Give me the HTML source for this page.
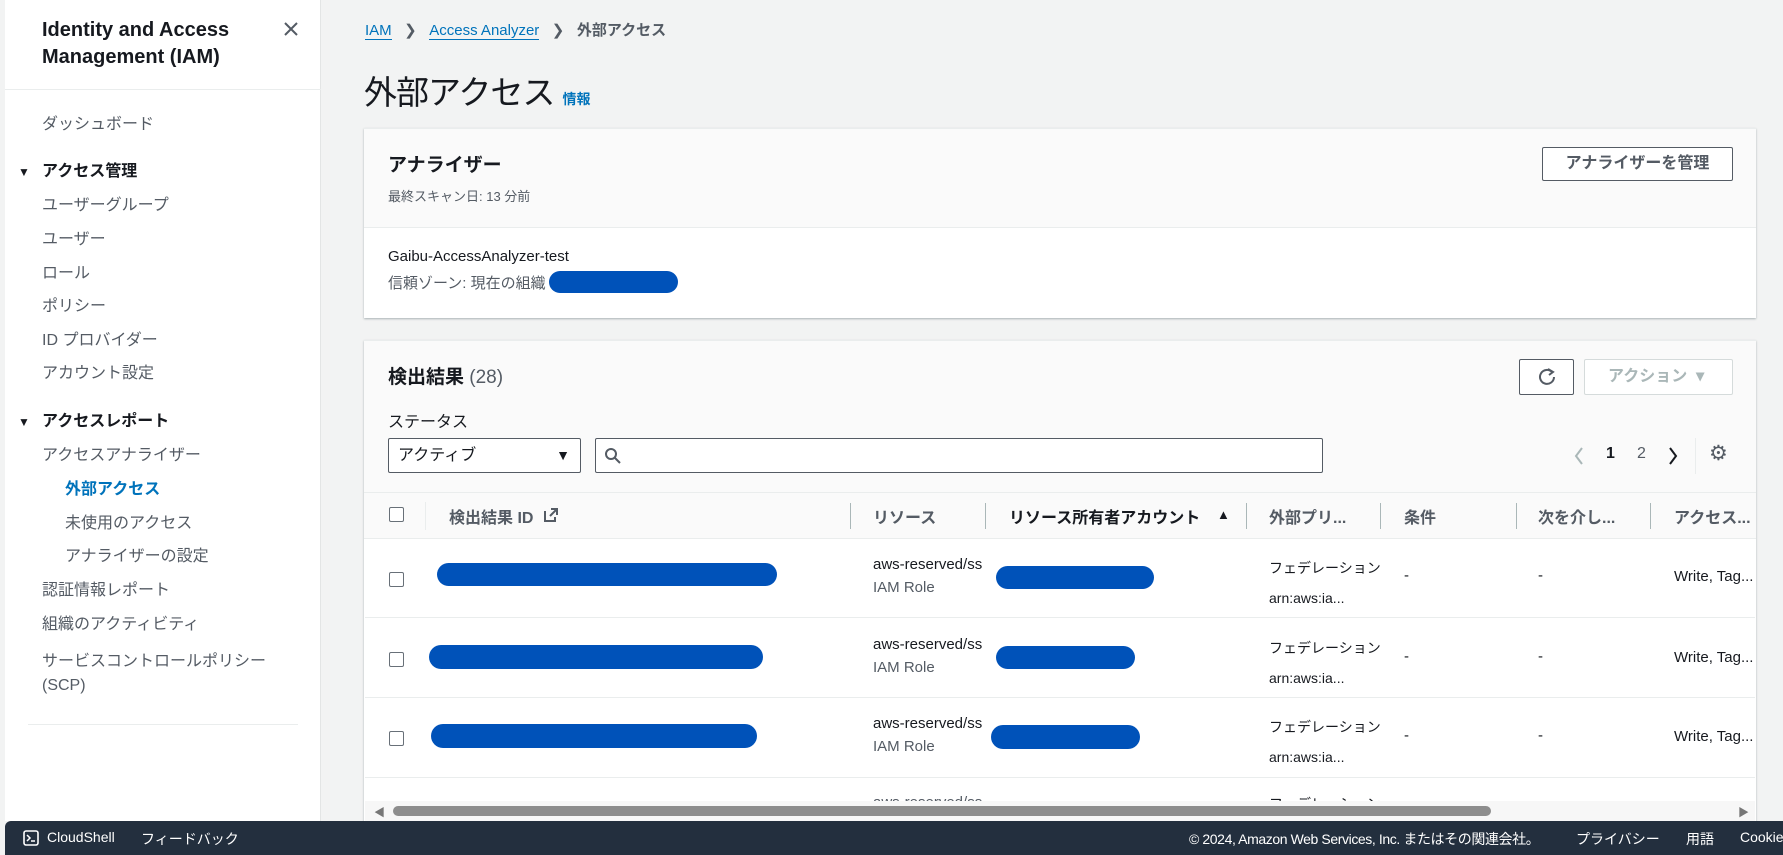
<!DOCTYPE html>
<html><head><meta charset="utf-8"><style>
*{box-sizing:border-box;margin:0;padding:0}
body{width:1783px;height:855px;overflow:hidden;background:#f2f3f3;font-family:"Liberation Sans","Noto Sans CJK JP",sans-serif;color:#16191f;position:relative}
.a{position:absolute;white-space:nowrap}
#side{position:absolute;left:5px;top:0;width:316px;height:821px;background:#fff;border-right:1px solid #e3e5e5}
.nav{position:absolute;left:37px;font-size:16px;color:#545b64;line-height:20px}
.b{font-weight:bold;color:#16191f}
.card{position:absolute;left:364px;width:1392px;background:#fff;box-shadow:0 1px 2px rgba(0,28,36,.3);border-top:1px solid #eaeded}
.blob{position:absolute;background:#0052b9;border-radius:12px}
.th{position:absolute;top:504px;font-size:16px;font-weight:bold;color:#545b64}
.dv{position:absolute;top:503px;width:1px;height:26px;background:#aab7b8}
.cb{position:absolute;left:389px;width:15px;height:15px;border:1px solid #687078;border-radius:2px;background:#fff}
.t{position:absolute;font-size:15px;color:#16191f;overflow:hidden;white-space:nowrap}
.s{color:#545b64}
.rl{position:absolute;left:365px;width:1390px;height:1px;background:#eaeded}
.tri{font-size:12px;display:inline-block;width:24px}
</style></head><body>
<div id="side">
<div class="a" style="left:37px;top:17px;font-size:20px;font-weight:bold;line-height:27px">Identity and Access<br>Management (IAM)</div>
<svg class="a" style="left:278px;top:21px" width="16" height="16"><path d="M2 2L14 14M14 2L2 14" stroke="#545b64" stroke-width="2"/></svg>
<div class="a" style="left:0;top:89px;width:316px;height:1px;background:#eaeded"></div>
<div class="nav" style="top:115px">ダッシュボード</div>
<div class="nav b" style="top:162px;left:13px"><span class="tri">▼</span>アクセス管理</div>
<div class="nav" style="top:196px">ユーザーグループ</div>
<div class="nav" style="top:230px">ユーザー</div>
<div class="nav" style="top:264px">ロール</div>
<div class="nav" style="top:297px">ポリシー</div>
<div class="nav" style="top:331px">ID プロバイダー</div>
<div class="nav" style="top:364px">アカウント設定</div>
<div class="nav b" style="top:412px;left:13px"><span class="tri">▼</span>アクセスレポート</div>
<div class="nav" style="top:446px">アクセスアナライザー</div>
<div class="nav" style="top:480px;left:60px;color:#0073bb;font-weight:bold">外部アクセス</div>
<div class="nav" style="top:514px;left:60px">未使用のアクセス</div>
<div class="nav" style="top:547px;left:60px">アナライザーの設定</div>
<div class="nav" style="top:581px">認証情報レポート</div>
<div class="nav" style="top:615px">組織のアクティビティ</div>
<div class="nav" style="top:650px;line-height:24px">サービスコントロールポリシー<br>(SCP)</div>
<div class="a" style="left:23px;top:724px;width:270px;height:1px;background:#eaeded"></div>
</div>

<div class="a" style="left:365px;top:19px;font-size:15px;color:#545b64"><span style="color:#0073bb;border-bottom:1px solid #0073bb">IAM</span>&nbsp;&nbsp; ❯ &nbsp;&nbsp;<span style="color:#0073bb;border-bottom:1px solid #0073bb">Access Analyzer</span>&nbsp;&nbsp; ❯ &nbsp;&nbsp;<b>外部アクセス</b></div>
<div class="a" style="left:364px;top:66px;font-size:33px;letter-spacing:-1px">外部アクセス <span style="font-size:14px;color:#0073bb;font-weight:bold;letter-spacing:0">情報</span></div>

<div class="card" style="top:128px;height:190px">
<div style="height:99px;background:#fafafa;border-bottom:1px solid #eaeded"></div>
</div>
<div class="a" style="left:388px;top:150px;font-size:19px;font-weight:bold">アナライザー</div>
<div class="a" style="left:388px;top:186px;font-size:13px;color:#545b64">最終スキャン日: 13 分前</div>
<div class="a" style="left:1542px;top:147px;width:191px;height:34px;border:1px solid #545b64;border-radius:2px;background:#fff;font-size:16px;font-weight:bold;color:#545b64;text-align:center;line-height:32px">アナライザーを管理</div>
<div class="a" style="left:388px;top:248px;font-size:15px">Gaibu-AccessAnalyzer-test</div>
<div class="a" style="left:388px;top:272px;font-size:15px;color:#545b64">信頼ゾーン: 現在の組織</div>
<div class="blob" style="left:549px;top:271px;width:129px;height:22px"></div>

<div class="card" style="top:340px;height:500px">
<div style="height:152px;background:#fafafa;border-bottom:1px solid #eaeded"></div>
<div style="height:46px;background:#fafafa;border-bottom:1px solid #eaeded"></div>
</div>
<div class="a" style="left:388px;top:362px;font-size:19px;font-weight:bold">検出結果 <span style="font-weight:normal;color:#545b64">(28)</span></div>
<div class="a" style="left:1519px;top:359px;width:55px;height:36px;border:1px solid #545b64;border-radius:2px;background:#fff"></div>
<svg class="a" style="left:1537px;top:367px" width="20" height="20" viewBox="0 0 20 20"><path d="M15 5A7 7 0 1 0 17 10" fill="none" stroke="#545b64" stroke-width="2"/><path d="M11 2L16 5L12 8" fill="none" stroke="#545b64" stroke-width="2"/></svg>
<div class="a" style="left:1584px;top:359px;width:149px;height:36px;border:1px solid #d5dbdb;border-radius:2px;background:#fff;font-size:16px;font-weight:bold;color:#aab7b8;line-height:34px;padding-left:23px">アクション &nbsp;▾</div>
<div class="a" style="left:388px;top:408px;font-size:16px">ステータス</div>
<div class="a" style="left:388px;top:438px;width:193px;height:35px;border:1px solid #545b64;border-radius:2px;background:#fff;font-size:16px;line-height:33px;padding-left:9px">アクティブ<span style="position:absolute;right:10px;font-size:14px">▼</span></div>
<div class="a" style="left:595px;top:438px;width:728px;height:35px;border:1px solid #545b64;border-radius:2px;background:#fff"></div>
<svg class="a" style="left:604px;top:447px" width="18" height="18"><circle cx="7" cy="7" r="5" fill="none" stroke="#545b64" stroke-width="2"/><path d="M11 11L16 16" stroke="#545b64" stroke-width="2"/></svg>
<svg class="a" style="left:1573px;top:446px" width="12" height="20"><path d="M9 2L3 10L9 18" fill="none" stroke="#aab7b8" stroke-width="2"/></svg>
<div class="a" style="left:1606px;top:445px;font-size:16px;font-weight:bold">1</div>
<div class="a" style="left:1637px;top:445px;font-size:16px;color:#545b64">2</div>
<svg class="a" style="left:1667px;top:446px" width="12" height="20"><path d="M3 2L9 10L3 18" fill="none" stroke="#16191f" stroke-width="2"/></svg>
<div class="a" style="left:1695px;top:438px;width:1px;height:36px;background:#eaeded"></div>
<div class="a" style="left:1709px;top:441px;font-size:21px;color:#545b64">⚙</div>

<div class="cb" style="top:507px"></div>
<div class="a" style="left:425px;top:502px;width:1px;height:28px;background:#eaeded"></div>
<div class="th" style="left:449px">検出結果 ID</div>
<svg class="a" style="left:543px;top:507px" width="16" height="16"><path d="M2 4V14H12V10M8 2H14V8M14 2L7 9" fill="none" stroke="#545b64" stroke-width="2"/></svg>
<div class="dv" style="left:850px"></div><div class="th" style="left:873px">リソース</div>
<div class="dv" style="left:985px"></div><div class="th" style="left:1009px;color:#16191f">リソース所有者アカウント</div><div class="th" style="left:1217px;font-size:13px;top:507px;color:#16191f">▲</div>
<div class="dv" style="left:1246px"></div><div class="th" style="left:1269px">外部プリ...</div>
<div class="dv" style="left:1380px"></div><div class="th" style="left:1404px">条件</div>
<div class="dv" style="left:1516px"></div><div class="th" style="left:1538px">次を介し...</div>
<div class="dv" style="left:1650px"></div><div class="th" style="left:1674px">アクセス...</div>

<div class="rl" style="top:617px"></div><div class="rl" style="top:697px"></div><div class="rl" style="top:777px"></div>

<div class="cb" style="top:572px"></div>
<div class="blob" style="left:437px;top:563px;width:340px;height:23px"></div>
<div class="blob" style="left:996px;top:566px;width:158px;height:23px"></div>
<div class="cb" style="top:652px"></div>
<div class="blob" style="left:429px;top:645px;width:334px;height:24px"></div>
<div class="blob" style="left:996px;top:646px;width:139px;height:23px"></div>
<div class="cb" style="top:731px"></div>
<div class="blob" style="left:431px;top:724px;width:326px;height:24px"></div>
<div class="blob" style="left:991px;top:725px;width:149px;height:24px"></div>

<div class="t" style="left:873px;top:556px;width:112px">aws-reserved/ss<br><span class="s" style="line-height:30px">IAM Role</span></div>
<div class="t" style="left:873px;top:636px;width:112px">aws-reserved/ss<br><span class="s" style="line-height:30px">IAM Role</span></div>
<div class="t" style="left:873px;top:715px;width:112px">aws-reserved/ss<br><span class="s" style="line-height:30px">IAM Role</span></div>
<div class="t" style="left:1269px;top:553px;font-size:14px;line-height:30px;width:112px">フェデレーションユ<br>arn:aws:ia...</div>
<div class="t" style="left:1269px;top:633px;font-size:14px;line-height:30px;width:112px">フェデレーションユ<br>arn:aws:ia...</div>
<div class="t" style="left:1269px;top:712px;font-size:14px;line-height:30px;width:112px">フェデレーションユ<br>arn:aws:ia...</div>
<div class="t" style="left:1404px;top:567px">-</div><div class="t" style="left:1538px;top:567px">-</div><div class="t" style="left:1674px;top:568px">Write, Tag...</div>
<div class="t" style="left:1404px;top:648px">-</div><div class="t" style="left:1538px;top:648px">-</div><div class="t" style="left:1674px;top:649px">Write, Tag...</div>
<div class="t" style="left:1404px;top:727px">-</div><div class="t" style="left:1538px;top:727px">-</div><div class="t" style="left:1674px;top:728px">Write, Tag...</div>
<div class="t" style="left:873px;top:794px;color:#545b64;width:112px">aws-reserved/ss</div>
<div class="t" style="left:1269px;top:794px;font-size:14px;width:112px">フェデレーションユ</div>

<div class="a" style="left:365px;top:801px;width:1390px;height:20px;background:#f7f7f7"></div>
<div class="a" style="left:393px;top:806px;width:1098px;height:10px;background:#8d8d8d;border-radius:5px"></div>
<div class="a" style="left:374px;top:804px;font-size:11px;color:#777">◀</div>
<div class="a" style="left:1738px;top:804px;font-size:11px;color:#777">▶</div>

<div class="a" style="left:5px;top:821px;width:1778px;height:34px;background:#232f3e;border-top-left-radius:6px"></div>
<svg class="a" style="left:23px;top:830px" width="16" height="16"><rect x="1" y="1" width="14" height="14" rx="2" fill="none" stroke="#fff" stroke-width="1.6"/><path d="M4 5L7 8L4 11M8 11H12" fill="none" stroke="#fff" stroke-width="1.5"/></svg>
<div class="a" style="left:47px;top:829px;font-size:14px;color:#fff">CloudShell</div>
<div class="a" style="left:141px;top:829px;font-size:14px;color:#fff">フィードバック</div>
<div class="a" style="left:1189px;top:829px;font-size:14px;color:#fff;letter-spacing:-0.4px">© 2024, Amazon Web Services, Inc. またはその関連会社。</div>
<div class="a" style="left:1576px;top:829px;font-size:14px;color:#fff">プライバシー</div>
<div class="a" style="left:1686px;top:829px;font-size:14px;color:#fff">用語</div>
<div class="a" style="left:1740px;top:829px;font-size:14px;color:#fff">Cookie</div>
</body></html>
